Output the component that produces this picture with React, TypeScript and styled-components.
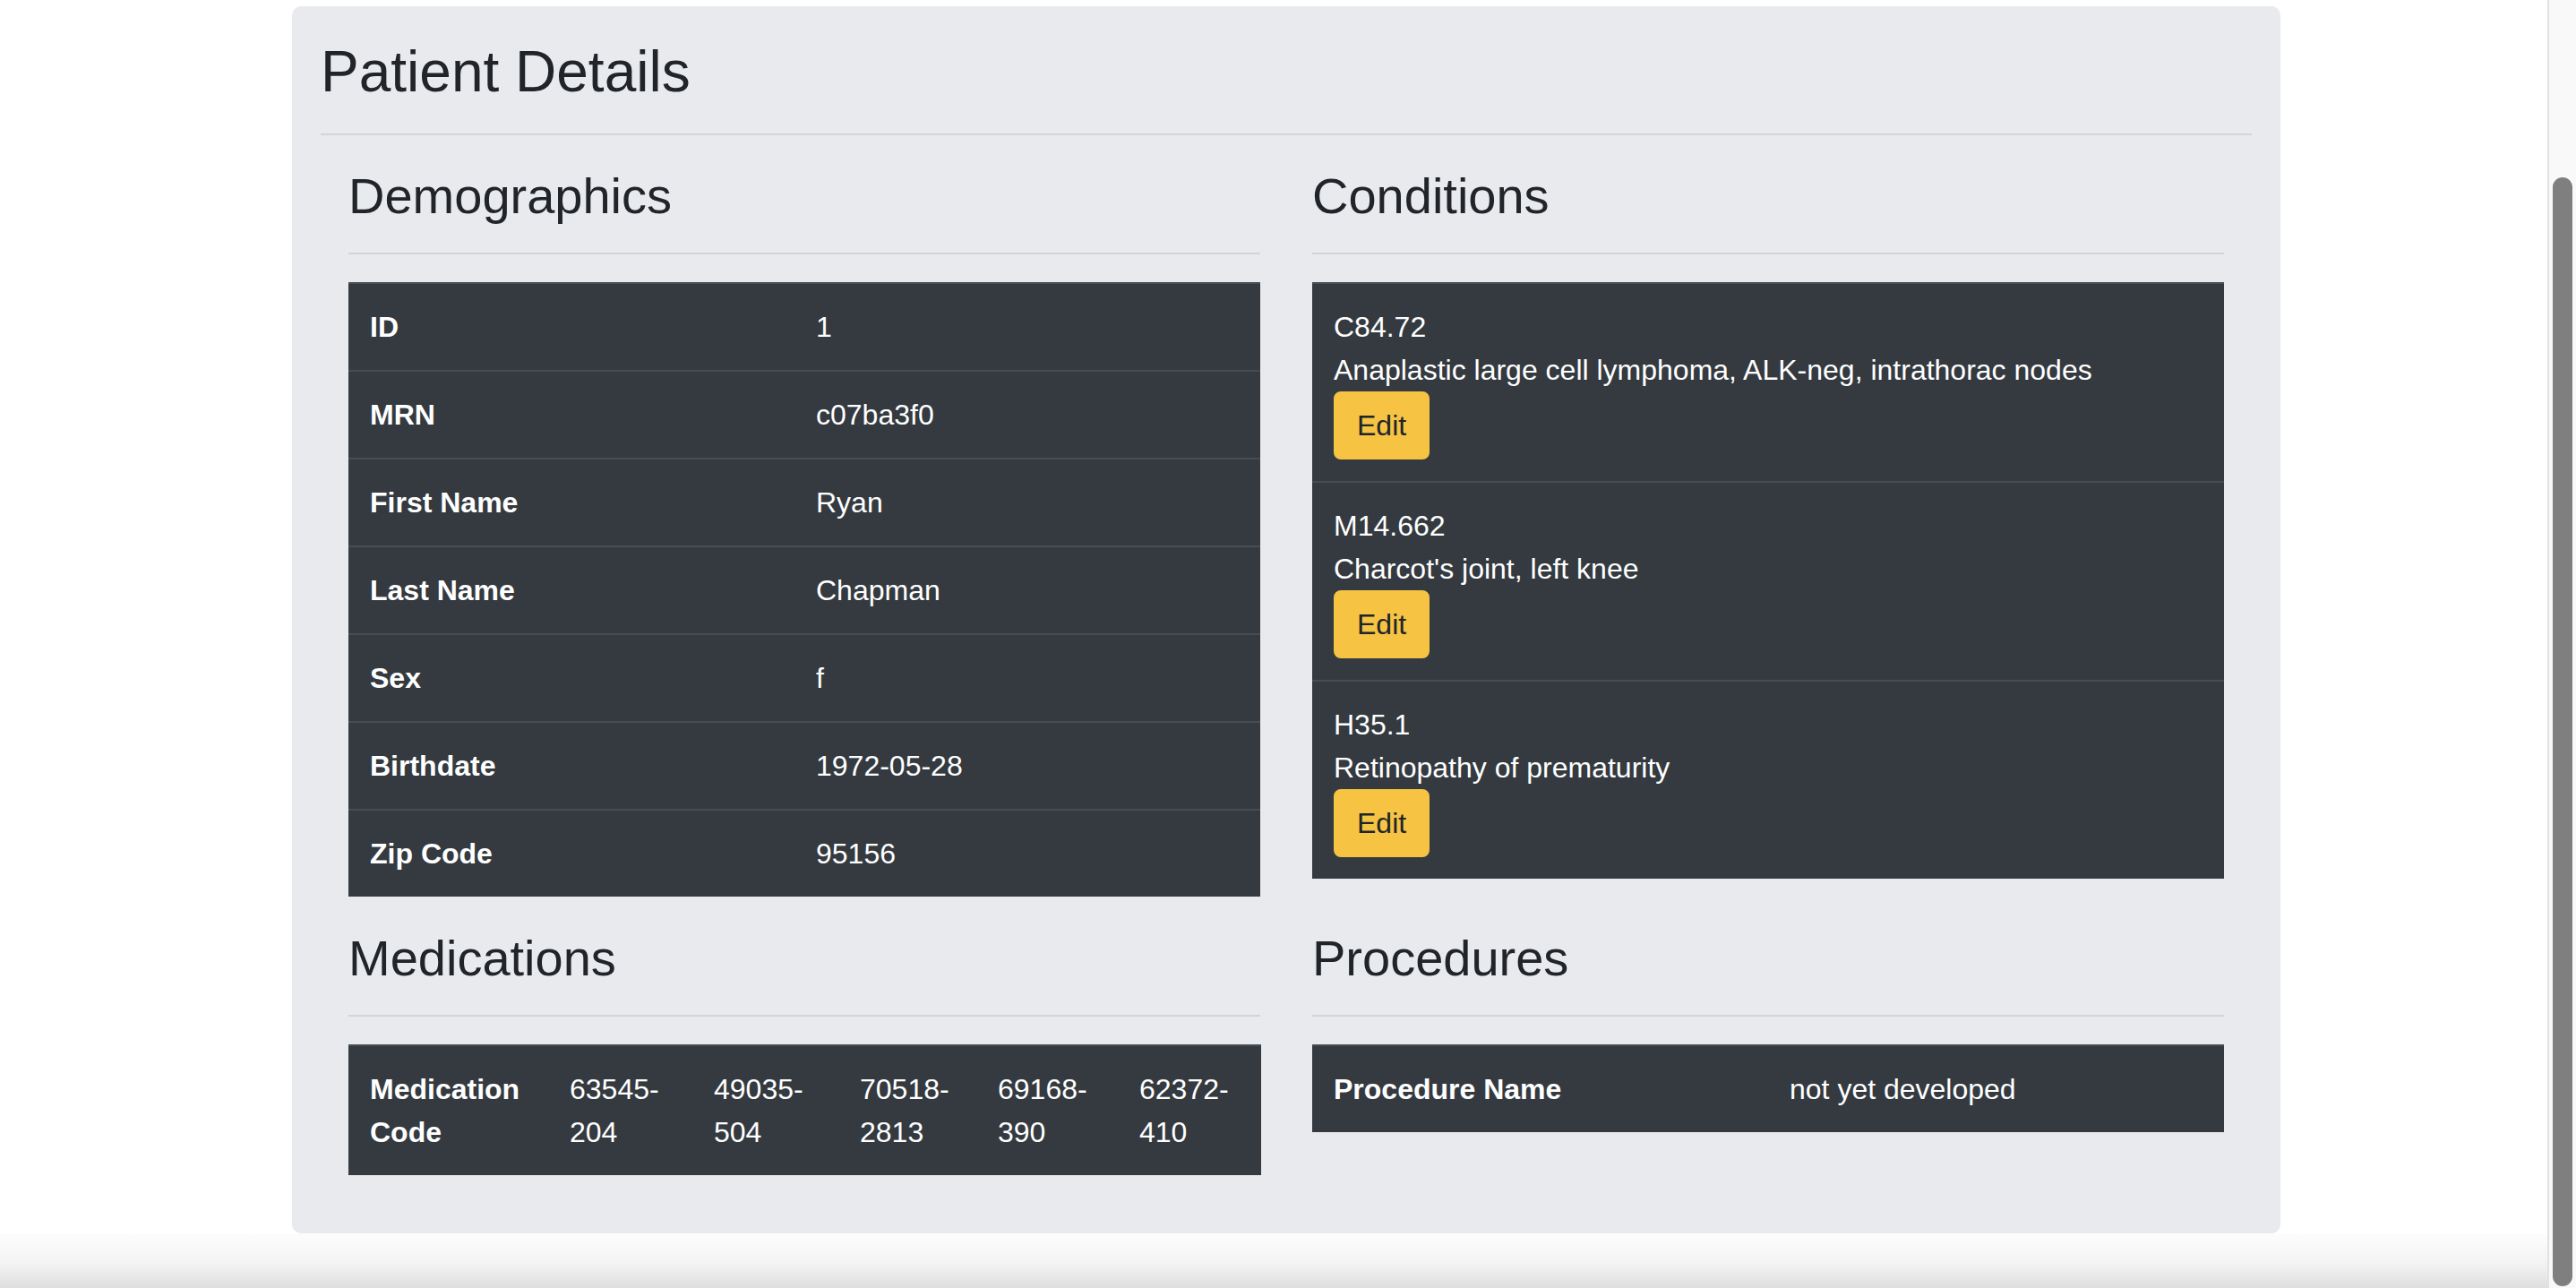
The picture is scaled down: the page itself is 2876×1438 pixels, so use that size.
import styled, { createGlobalStyle } from "styled-components";

const GlobalStyle = createGlobalStyle`
  html, body {
    margin: 0;
    padding: 0;
    background: #fff;
    overflow: hidden;
  }
  body {
    font-family: "Liberation Sans", Arial, sans-serif;
    color: #212529;
  }
  * {
    box-sizing: border-box;
  }
`;

const demographics = [
  ["ID", "1"],
  ["MRN", "c07ba3f0"],
  ["First Name", "Ryan"],
  ["Last Name", "Chapman"],
  ["Sex", "f"],
  ["Birthdate", "1972-05-28"],
  ["Zip Code", "95156"],
];

const conditions = [
  { code: "C84.72", name: "Anaplastic large cell lymphoma, ALK-neg, intrathorac nodes" },
  { code: "M14.662", name: "Charcot's joint, left knee" },
  { code: "H35.1", name: "Retinopathy of prematurity" },
];

const medications = ["63545-204", "49035-504", "70518-2813", "69168-390", "62372-410"];
const medWidths = [223, 161, 163, 154, 158, 160];

const Screen = styled.div`
  display: flex;
  height: 100vh;
`;

const Viewport = styled.div`
  flex: 1;
  display: flex;
  flex-direction: column;
  min-width: 0;
`;

const Page = styled.main`
  flex: 1;
  padding-top: 7px;
`;

const BottomFade = styled.div`
  height: 62px;
  background: linear-gradient(to bottom, #fdfdfd 0%, #f3f3f3 55%, #dedede 100%);
`;

const ScrollTrack = styled.div`
  width: 32px;
  background: #f9f9f9;
  border-left: 2px solid #e2e2e2;
  padding: 198px 4px 2px 4px;
  display: flex;
`;

const ScrollThumb = styled.div`
  flex: 1;
  background: #7f7f7f;
  border-radius: 11px;
`;

const Card = styled.section`
  width: 2220px;
  margin-left: 326px;
  padding: 32px 32px 30px;
  background: #e9eaee;
  border-radius: 10px;
`;

const PageTitle = styled.h2`
  margin: 3px 0 0;
  font-size: 64px;
  font-weight: 500;
  line-height: 1.2;
`;

const Divider = styled.hr`
  margin: 30px 0 34px;
  border: 0;
  border-top: 2px solid #d3d4d8;
`;

const Sections = styled.div`
  display: grid;
  grid-template-columns: 1fr 1fr;
  column-gap: 58px;
  padding: 0 31px;
`;

const Section = styled.div`
  min-width: 0;
`;

const SectionTitle = styled.h3`
  margin: 0 0 31px;
  padding-bottom: 30px;
  border-bottom: 2px solid #d3d4d8;
  font-size: 56px;
  font-weight: 500;
  line-height: 1.2;
`;

const Table = styled.table<{ $fixed?: boolean }>`
  width: 100%;
  margin-bottom: 35px;
  border-collapse: collapse;
  table-layout: ${(p) => (p.$fixed ? "fixed" : "auto")};
  background: #343a40;
  color: #fff;
  font-size: 32px;
  line-height: 48px;

  th,
  td {
    padding: 24px;
    border-top: 2px solid #454d55;
    text-align: left;
    vertical-align: top;
  }
  th {
    font-weight: 700;
  }
`;

const LabelCell = styled.th<{ $width?: number }>`
  width: ${(p) => (p.$width ? `${p.$width}px` : "auto")};
`;

const Line = styled.div``;

const EditButton = styled.button`
  display: inline-block;
  padding: 12px 24px;
  border: 2px solid #f6c343;
  border-radius: 8px;
  background: #f6c343;
  color: #212529;
  font-family: inherit;
  font-size: 32px;
  line-height: 48px;
  cursor: pointer;
`;

export default function App() {
  return (
    <>
      <GlobalStyle />
      <Screen>
        <Viewport>
          <Page>
            <Card>
              <PageTitle>Patient Details</PageTitle>
              <Divider />
              <Sections>
                <Section>
                  <SectionTitle>Demographics</SectionTitle>
                  <Table>
                    <tbody>
                      {demographics.map(([label, value]) => (
                        <tr key={label}>
                          <LabelCell scope="row" $width={498}>
                            {label}
                          </LabelCell>
                          <td>{value}</td>
                        </tr>
                      ))}
                    </tbody>
                  </Table>
                </Section>

                <Section>
                  <SectionTitle>Conditions</SectionTitle>
                  <Table>
                    <tbody>
                      {conditions.map((c) => (
                        <tr key={c.code}>
                          <td>
                            <Line>{c.code}</Line>
                            <Line>{c.name}</Line>
                            <EditButton type="button">Edit</EditButton>
                          </td>
                        </tr>
                      ))}
                    </tbody>
                  </Table>
                </Section>

                <Section>
                  <SectionTitle>Medications</SectionTitle>
                  <Table $fixed>
                    <colgroup>
                      {medWidths.map((w, i) => (
                        <col key={i} style={{ width: w }} />
                      ))}
                    </colgroup>
                    <tbody>
                      <tr>
                        <th scope="row">Medication Code</th>
                        {medications.map((m) => (
                          <td key={m}>{m}</td>
                        ))}
                      </tr>
                    </tbody>
                  </Table>
                </Section>

                <Section>
                  <SectionTitle>Procedures</SectionTitle>
                  <Table $fixed>
                    <tbody>
                      <tr>
                        <th scope="row">Procedure Name</th>
                        <td>not yet developed</td>
                      </tr>
                    </tbody>
                  </Table>
                </Section>
              </Sections>
            </Card>
          </Page>
          <BottomFade />
        </Viewport>
        <ScrollTrack>
          <ScrollThumb />
        </ScrollTrack>
      </Screen>
    </>
  );
}
